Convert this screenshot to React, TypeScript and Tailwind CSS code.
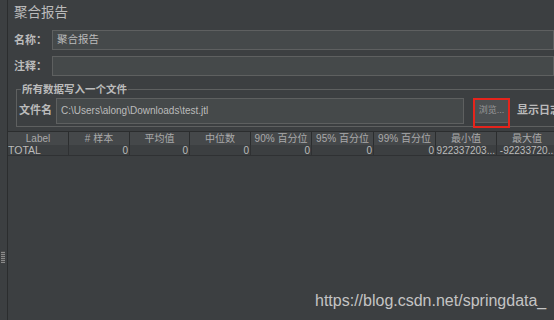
import React from 'react'

const cols = [
  { label: 'Label', w: 'w-[61px]', value: 'TOTAL' },
  { label: '# 样本', w: 'w-[61px]', value: '0' },
  { label: '平均值', w: 'w-[60px]', value: '0' },
  { label: '中位数', w: 'w-[61px]', value: '0' },
  { label: '90% 百分位', w: 'w-[61px]', value: '0' },
  { label: '95% 百分位', w: 'w-[62px]', value: '0' },
  { label: '99% 百分位', w: 'w-[62px]', value: '0' },
  { label: '最小值', w: 'w-[61px]', value: '922337203...' },
  { label: '最大值', w: 'w-[61px]', value: '-92233720...' },
]

const font = 'font-["Liberation_Sans","Noto_Sans_CJK_SC",sans-serif]'

export default function App() {
  return (
    <div className={`relative flex h-[320px] w-[554px] overflow-hidden bg-[#3c3f41] text-[#bbbbbb] ${font}`}>
      {/* split pane divider */}
      <div className="flex w-[8px] shrink-0 items-center border-r border-[#2b2d2e]">
        <div className="ml-[1px] mt-[194px] h-[12px] w-[4px] bg-[repeating-linear-gradient(0deg,#8a8a8a_0px,#8a8a8a_1px,#4a4a4a_1px,#4a4a4a_2px)]" />
      </div>

      <div className="flex min-w-0 flex-1 flex-col">
        <div className="pl-[6px]">
          <div className="h-[24px] pt-[4px] text-[13.5px] leading-[17px]">聚合报告</div>

          <div className="mt-[6px] flex h-[20px] items-center">
            <span className="w-[38px] shrink-0 text-[11px] font-bold">名称：</span>
            <div className="flex h-[20px] flex-1 items-center border border-[#5e6060] bg-[#45494a] pl-[4px] text-[10.5px] text-[#bbbbbb]">
              聚合报告
            </div>
          </div>

          <div className="mt-[6px] flex h-[20px] items-center">
            <span className="w-[38px] shrink-0 text-[11px] font-bold">注释：</span>
            <div className="h-[20px] flex-1 border border-[#5e6060] bg-[#45494a]" />
          </div>
        </div>

        <fieldset className="ml-[8px] mt-[6px] h-[45px] w-[600px] border border-[#5e6060] pl-[2px]">
          <legend className="ml-[2px] px-[1px] text-[10.5px] font-bold leading-[14px]">所有数据写入一个文件</legend>
          <div className="mt-[2px] flex h-[25px] items-center">
            <span className="w-[37px] shrink-0 text-[11px] font-bold">文件名</span>
            <div className="flex h-[26px] w-[408px] items-center border border-[#5e6060] bg-[#45494a] pl-[4px] text-[10px]">
              C:\Users\along\Downloads\test.jtl
            </div>
            <div className="relative ml-[9px] flex h-[25px] w-[37px] items-center justify-center rounded-[3px] border border-[#5e6060] bg-[#4c5052] text-[9px] text-[#9a9a9a]">
              浏览...
              <div className="absolute -left-[1px] -top-[1px] h-[30px] w-[37px] border-2 border-[#e5241c]" />
            </div>
            <span className="ml-[7px] whitespace-nowrap text-[11px] font-bold">显示日志内容</span>
          </div>
        </fieldset>

        <div className="mt-[4px] flex h-[14px] border-t border-[#2b2d2e] bg-[#45484a]">
          {cols.map((c) => (
            <div
              key={c.label}
              className={`${c.w} shrink-0 whitespace-nowrap border-r border-[#2b2d2e] text-center text-[10px] leading-[13px] text-[#aaaaaa]`}
            >
              {c.label}
            </div>
          ))}
        </div>
        <div className="flex h-[11px] border-b border-[#2f3133]">
          {cols.map((c, i) => (
            <div
              key={c.label}
              className={`${c.w} shrink-0 overflow-hidden whitespace-nowrap border-r border-[#2f3133] leading-[11px] ${i === 0 ? 'text-left text-[10.5px]' : 'pr-[1px] text-right text-[10px]'}`}
            >
              {c.value}
            </div>
          ))}
        </div>
      </div>

      <div className="absolute left-[315px] top-[293px] text-[16px] leading-none text-[#c4c4c4]">https://blog.csdn.net/springdata_</div>
    </div>
  )
}
